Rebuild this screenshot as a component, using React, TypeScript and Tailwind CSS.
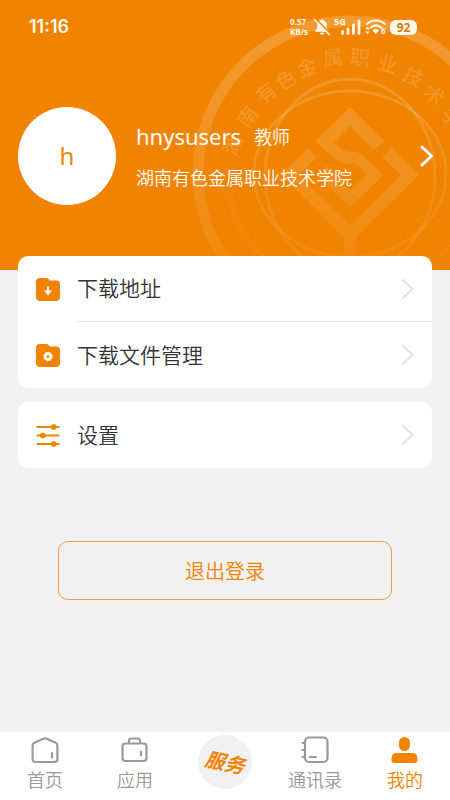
import type { ReactNode } from "react";

const SEAL_NAME: { char: string; x: number; y: number; angle: number }[] = [
  { char: "湖", x: 43, y: 115, angle: -66 },
  { char: "南", x: 58, y: 87, angle: -54 },
  { char: "有", x: 76, y: 63, angle: -42 },
  { char: "色", x: 96, y: 50, angle: -30 },
  { char: "金", x: 117, y: 38, angle: -18 },
  { char: "属", x: 143, y: 28, angle: -6 },
  { char: "职", x: 170, y: 28, angle: 5 },
  { char: "业", x: 197, y: 34, angle: 16 },
  { char: "技", x: 223, y: 47, angle: 28 },
  { char: "术", x: 244, y: 65, angle: 40 },
  { char: "学", x: 262, y: 88, angle: 52 },
];

function Seal() {
  return (
    <svg
      className="pointer-events-none absolute top-0 right-0 h-[270px] w-[260px]"
      viewBox="0 0 260 270"
      aria-hidden="true"
    >
      <defs>
        <linearGradient id="sealFade" gradientUnits="userSpaceOnUse" x1="0" y1="10" x2="0" y2="270">
          <stop offset="0" stopColor="#fff" stopOpacity="0.2" />
          <stop offset="1" stopColor="#fff" stopOpacity="0.05" />
        </linearGradient>
        <path id="sealArc" d="M34 173 A126 126 0 0 0 286 173" />
      </defs>
      <g fill="none" stroke="url(#sealFade)">
        <circle cx="160" cy="173" r="152" strokeWidth="11" />
        <ellipse cx="160" cy="176" rx="85" ry="97" strokeWidth="3" />
        <ellipse cx="160" cy="174" rx="96" ry="83" strokeWidth="3" />
      </g>
      <g fill="url(#sealFade)">
        <path d="M160 107 L194 141 L184 150 L160 126 L144 142 Q151 151 160 152 Q168 151 173 156 L194 175 L160 207 L126 175 L136 166 L160 190 L177 174 L169 166 Q166 163 159 164 Q151 164 145 159 L125 141 Z" />
        <path d="M118 148 L91 175 L154 237 V270 H166 V237 L229 175 L202 148 L192 157 L211 175 L160 225 L109 175 L127 157 Z" />
      </g>
      <g
        fill="#fff"
        fillOpacity="0.17"
        fontFamily="'Noto Sans CJK SC', sans-serif"
        fontSize="20"
        fontWeight="500"
        textAnchor="middle"
      >
        {SEAL_NAME.map(({ char, x, y, angle }) => (
          <text key={char} transform={`translate(${x} ${y + 30}) rotate(${angle})`} y="7">
            {char}
          </text>
        ))}
      </g>
      <text fill="#fff" fillOpacity="0.09" fontFamily="'Liberation Sans', sans-serif" fontSize="11">
        <textPath href="#sealArc" startOffset="12">
          HUNAN NONFERROUS METALS VOCATIONAL AND TECHNICAL
        </textPath>
      </text>
    </svg>
  );
}

function StatusBar() {
  return (
    <div className="flex h-[54px] items-center justify-between pr-[33px] pl-[29px] text-[#fff8ec]">
      <span className="font-['Inter',sans-serif] text-lg font-semibold">11:16</span>
      <div className="flex items-center gap-[3px]">
        <span className="flex w-5 flex-col font-['Open_Sans',sans-serif] text-[8px] leading-[10px] font-bold whitespace-nowrap">
          <span>0.57</span>
          <span>KB/s</span>
        </span>
        <svg className="h-[18px] w-[18px]" viewBox="0 0 18 18" aria-hidden="true">
          <path
            d="M9 1.2c.8 0 1.2.5 1.2 1.1 2.300.6 3.700 2.500 3.700 4.900v3.300l1.900 2.600v.7H2.200v-.7l1.900-2.600V7.200c0-2.400 1.400-4.300 3.700-4.900 0-.6.4-1.100 1.200-1.100zM6.500 14.800h5c-.3 1.200-1.200 2-2.500 2s-2.200-.8-2.500-2z"
            fill="currentColor"
          />
          <path d="M2.800.9 17 15.400" stroke="#f08300" strokeWidth="1.600" />
          <path d="M1.200 1.300 16.300 16.600" stroke="currentColor" strokeWidth="1.500" strokeLinecap="round" />
        </svg>
        <svg className="h-[18px] w-7" viewBox="0 0 28 18" aria-hidden="true">
          <text x="0" y="7" fill="currentColor" fontFamily="'Open Sans', sans-serif" fontSize="9" fontWeight="700">
            5G
          </text>
          <path
            d="M8.500 13.500v2M14 11v4.500M19.500 7v8.500M25 3v12.500"
            stroke="currentColor"
            strokeWidth="2.800"
            strokeLinecap="round"
          />
        </svg>
        <svg className="h-[18px] w-[22px]" viewBox="0 0 22 18" aria-hidden="true">
          <g fill="none" stroke="currentColor" strokeWidth="2.200" strokeLinecap="round">
            <path d="M2 6C7 1.300 14.800 1.300 19.800 6" />
            <path d="M5.700 9.700c3.200-2.900 7.200-2.900 10.400 0" />
          </g>
          <path d="M7.300 12.200c2.200-1.700 4.800-1.700 7 0l-3.500 4z" fill="currentColor" />
          <path d="M2.500 8.800 4.700 11.600H.3zM2.500 16.200.3 13.400h4.400z" fill="currentColor" />
          <text x="16" y="16" fill="currentColor" fontFamily="'Open Sans', sans-serif" fontSize="8" fontWeight="700">
            6
          </text>
        </svg>
        <span className="flex h-[15px] w-[27px] items-center justify-center rounded-[6px] bg-[#fff8ec] font-['Open_Sans',sans-serif] text-xs leading-[15px] font-bold text-[#d87900]">
          92
        </span>
      </div>
    </div>
  );
}

function Chevron({ className }: { className: string }) {
  return (
    <svg className={`h-[22px] w-[13px] shrink-0 ${className}`} viewBox="0 0 13 22" fill="none" aria-hidden="true">
      <path d="m2 2 9.500 9L2 20" stroke="currentColor" strokeLinecap="round" strokeLinejoin="round" />
    </svg>
  );
}

const FOLDER = "M4 0h6.500q1 0 1.700.8L13.800 2.600H20q4 0 4 4V19q0 4-4 4H4q-4 0-4-4V4q0-4 4-4z";

function DownloadFolderIcon() {
  return (
    <svg className="h-[23px] w-6" viewBox="0 0 24 23" aria-hidden="true">
      <path d={FOLDER} fill="#f08300" />
      <path d="M12 9v5" stroke="#fff" strokeWidth="2" strokeLinecap="round" />
      <path d="M8.500 12.700h7L12 17.200z" fill="#fff" stroke="#fff" strokeWidth=".5" strokeLinejoin="round" />
    </svg>
  );
}

function FileFolderIcon() {
  return (
    <svg className="h-[23px] w-6" viewBox="0 0 24 23" aria-hidden="true">
      <path d={FOLDER} fill="#f08300" />
      <circle cx="12" cy="12.500" r="2.900" fill="none" stroke="#fff" strokeWidth="2.800" />
      <circle cx="12" cy="12.500" r="4.300" fill="none" stroke="#fff" strokeWidth="1" strokeDasharray="1.690 1.690" />
    </svg>
  );
}

function SlidersIcon() {
  return (
    <svg className="h-[23px] w-6" viewBox="0 0 24 23" aria-hidden="true">
      <path d="M1.500 3h21M1.500 11.500h21M1.500 20h21" stroke="#f08300" strokeWidth="2.200" strokeLinecap="round" />
      <g fill="#f08300">
        <rect x="15" y=".3" width="5.400" height="5.400" rx="2" />
        <rect x="4" y="8.800" width="5.400" height="5.400" rx="2" />
        <rect x="15" y="17.300" width="5.400" height="5.400" rx="2" />
      </g>
    </svg>
  );
}

function MenuRow({ icon, label, divided = false }: { icon: ReactNode; label: string; divided?: boolean }) {
  return (
    <button type="button" className="flex h-[66px] w-full items-center pl-[18px] text-left">
      <span className="flex w-[41px] shrink-0 items-center">{icon}</span>
      <span
        className={`flex h-full flex-1 items-center justify-between pr-[18px] ${
          divided ? "border-b border-[#e8e8e8]" : ""
        }`}
      >
        <span className="pb-[3px] text-[21px] leading-6 text-[#333]">{label}</span>
        <Chevron className="stroke-2 text-[#dce3e8]" />
      </span>
    </button>
  );
}

function HomeIcon() {
  return (
    <svg className="h-7 w-7" viewBox="0 0 28 28" fill="none" stroke="currentColor" strokeWidth="2.200" aria-hidden="true">
      <path d="M1.600 9.500q0-1.900 1.700-2.700l9-4q1.700-.8 3.400 0l9 4q1.700.8 1.700 2.700V23q0 3-3 3h-18.800q-3 0-3-3z" />
      <path d="M21 17v4.500" strokeLinecap="round" />
    </svg>
  );
}

function AppsIcon() {
  return (
    <svg className="h-7 w-7" viewBox="0 0 28 28" fill="none" stroke="currentColor" strokeWidth="2.200" aria-hidden="true">
      <rect x="1.500" y="7.500" width="24" height="17.500" rx="3" />
      <path d="M8 7V5q0-2.500 2.500-2.500h6Q19 2.500 19 5v2" />
      <path d="M20 15.500v4" strokeLinecap="round" />
    </svg>
  );
}

function ContactsIcon() {
  return (
    <svg className="h-7 w-7" viewBox="0 0 28 28" fill="none" stroke="currentColor" strokeWidth="2.200" aria-hidden="true">
      <rect x="4" y="1.500" width="22.500" height="24.500" rx="4" />
      <path d="M1.500 7H4M1.500 14H4M1.500 21H4M9 21h6" strokeLinecap="round" />
    </svg>
  );
}

function PersonIcon() {
  return (
    <svg className="h-7 w-7" viewBox="0 0 28 28" fill="currentColor" aria-hidden="true">
      <rect x="8" y="1" width="11" height="14" rx="5.500" />
      <path d="M5.500 17h16q5 0 5 6v1q0 3-3 3h-20q-3 0-3-3v-1q0-6 5-6z" />
    </svg>
  );
}

function Tab({ icon, label, active = false }: { icon: ReactNode; label: string; active?: boolean }) {
  return (
    <a
      href="#"
      aria-current={active ? "page" : undefined}
      className={`flex flex-1 flex-col items-center pt-1 ${active ? "text-[#f08300]" : "text-[#999]"}`}
    >
      {icon}
      <span className="mt-[3px] text-lg leading-6 whitespace-nowrap">{label}</span>
    </a>
  );
}

export default function App() {
  return (
    <div className="flex min-h-screen flex-col bg-[#f1f1f1] font-['Noto_Sans_CJK_SC_DemiLight','Noto_Sans_CJK_SC',sans-serif] font-[350]">
      <header className="relative h-[270px] shrink-0 overflow-hidden bg-[#f08300] text-white">
        <Seal />
        <div className="relative">
          <StatusBar />
          <button type="button" className="mt-[53px] flex w-full items-center pr-[17px] pl-[18px] text-left">
            <span className="flex h-[98px] w-[98px] shrink-0 items-center justify-center rounded-full bg-white font-['Noto_Sans',sans-serif] text-2xl font-normal text-[#f08300]">
              h
            </span>
            <span className="ml-5 flex flex-1 flex-col gap-[9px]">
              <span className="flex items-center gap-[13px]">
                <span className="font-['Noto_Sans',sans-serif] text-[22px] leading-8 font-normal">hnysusers</span>
                <span className="text-lg leading-8">教师</span>
              </span>
              <span className="text-lg leading-8 whitespace-nowrap">湖南有色金属职业技术学院</span>
            </span>
            <Chevron className="stroke-[3px] text-white" />
          </button>
        </div>
      </header>

      <main className="relative -mt-[14px] flex flex-1 flex-col px-[18px]">
        <section className="overflow-hidden rounded-[10px] bg-white">
          <MenuRow icon={<DownloadFolderIcon />} label="下载地址" divided />
          <MenuRow icon={<FileFolderIcon />} label="下载文件管理" />
        </section>
        <section className="mt-[14px] overflow-hidden rounded-[10px] bg-white">
          <MenuRow icon={<SlidersIcon />} label="设置" />
        </section>
        <button
          type="button"
          className="mx-10 mt-[73px] h-[59px] rounded-[10px] border border-[#eba13f] text-xl text-[#f08300]"
        >
          退出登录
        </button>
      </main>

      <nav className="flex h-[68px] shrink-0 bg-white">
        <Tab icon={<HomeIcon />} label="首页" />
        <Tab icon={<AppsIcon />} label="应用" />
        <a href="#" className="flex flex-1 flex-col items-center pt-[3px]">
          <span className="flex h-[54px] w-[54px] items-center justify-center rounded-full bg-[#f1f1f1]">
            <span className="rotate-12 font-['Noto_Sans_CJK_SC',sans-serif] text-xl leading-6 font-bold whitespace-nowrap text-[#f08300] italic">
              服务
            </span>
          </span>
        </a>
        <Tab icon={<ContactsIcon />} label="通讯录" />
        <Tab icon={<PersonIcon />} label="我的" active />
      </nav>
    </div>
  );
}
